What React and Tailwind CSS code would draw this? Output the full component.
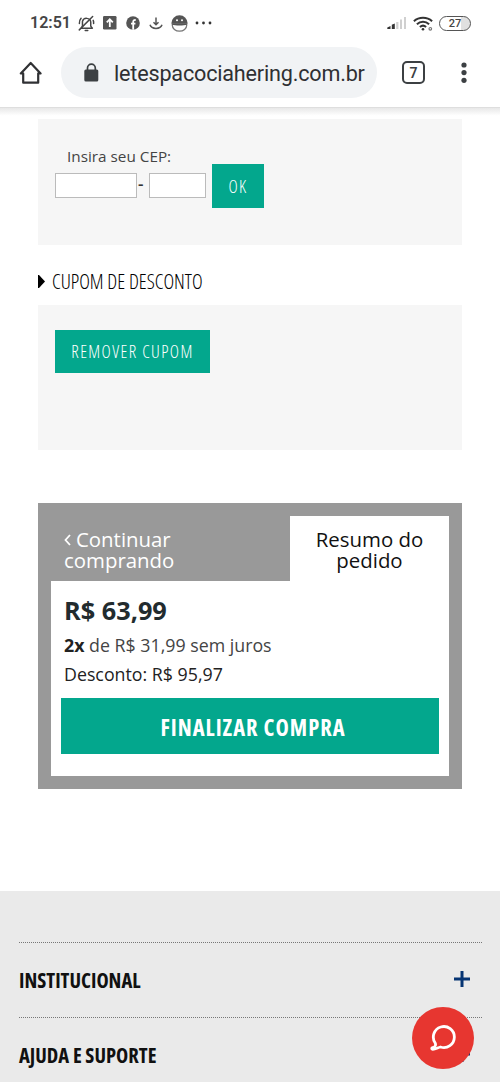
import React from 'react';

const StatusBar = () => (
  <div className="flex h-[46px] items-center pl-[30px] pr-[29px] text-[#454545]">
    <span className="w-[40px] whitespace-nowrap font-['Roboto',sans-serif] text-[16px] font-semibold leading-none">12:51</span>
    <svg className="ml-[8px] h-[17px] w-[17px]" viewBox="0 0 16 16" fill="none" stroke="currentColor" strokeWidth="1.4" strokeLinecap="round" strokeLinejoin="round">
      <path d="M3 12.5h10.5L12 10.5V6.7A4 4 0 0 0 4.2 6v4.5L3 12.5" />
      <path d="M6.8 14.5h2.4M13.8 1.5 1.2 14M1.3 8c-.2-2 .4-3.7 1.6-5M14.7 8c.1-1.2 0-2.2-.4-3" />
    </svg>
    <svg className="ml-[8px] h-[14px] w-[14px]" viewBox="0 0 14 14">
      <rect width="13.5" height="13.5" rx="1.2" fill="#555" />
      <path d="M6.8 11V4M3.8 6.3 6.8 3.2l3 3.1" fill="none" stroke="white" strokeWidth="1.8" />
    </svg>
    <svg className="ml-[9px] h-[14px] w-[14px]" viewBox="0 0 14 14">
      <circle cx="7" cy="7" r="6.8" fill="#555" />
      <path d="M7.2 13.8V6.1c0-1.5.6-2.2 2.5-2.1M5 7.6h4.4" fill="none" stroke="white" strokeWidth="1.8" />
    </svg>
    <svg className="ml-[9px] h-[14px] w-[14px]" viewBox="0 0 14 14" fill="none" stroke="#555" strokeWidth="1.5">
      <path d="M7 1.5v7M4.5 6.3 7 8.8l2.5-2.5M1 8.8c.6 2 2.8 3.6 6 3.6s5.4-1.6 6-3.6" />
    </svg>
    <svg className="ml-[8px] h-[17px] w-[17px]" viewBox="0 0 17 17">
      <path d="M.3 8.5a8.2 8.2 0 0 1 16.4 0z" fill="#555" />
      <path d="M1.3 8.7h14.4v1.5a7.2 6 0 0 1-14.4 0z" fill="white" stroke="#777" strokeWidth="1.3" />
      <path d="M1 8.5h15v1c-3 1.3-12 1.3-15 0z" fill="#555" />
      <circle cx="6" cy="5.2" r="1" fill="white" />
      <circle cx="11" cy="5.2" r="1" fill="white" />
    </svg>
    <svg className="ml-[7px] h-1 w-[18px]" viewBox="0 0 18 4" fill="#333">
      <circle cx="2" cy="2" r="1.4" /><circle cx="8.5" cy="2" r="1.4" /><circle cx="15" cy="2" r="1.4" />
    </svg>
    <svg className="ml-auto h-[14px] w-[20px]" viewBox="0 0 20 14">
      <path d="M.3 11.5 3.5 10v3H.3zM4.8 8.8 7.8 7.5V13h-3z" fill="#333" />
      <path d="M9.2 6h2.2v7H9.2zM13 3.5h2V13h-2zM17 1h2v12h-2z" fill="#d0d0d0" />
    </svg>
    <svg className="ml-[6px] h-[15px] w-[20px]" viewBox="0 0 20 15" fill="none" stroke="#333" strokeWidth="2">
      <path d="M.9 5.2c5-4.6 13.2-4.6 18.2 0M3.9 8.2c3.5-3.2 8.7-3.2 12.2 0M6.9 11c1.8-1.6 4.4-1.6 6.2 0" />
      <circle cx="10" cy="13.3" r="1.3" fill="#333" stroke="none" />
      <circle cx="17.3" cy="12.8" r="1.3" stroke="#777" strokeWidth="1.2" />
    </svg>
    <div className="ml-[6px] flex h-[15px] w-[32px] items-center justify-center rounded-full border-[1.5px] border-[#555] bg-[linear-gradient(90deg,white_70%,#e0e0e0_70%)] font-['Roboto',sans-serif] text-[11px] font-medium leading-none">27</div>
  </div>
);

const BrowserBar = () => (
  <div className="flex h-[62px] items-start border-b border-[#dedede] pt-px">
    <svg className="ml-[19px] mt-[14px] h-6 w-6" viewBox="0 0 24 24" fill="none" stroke="#303134" strokeWidth="2.2">
      <path d="M4.2 12.4H1.8L11.7 2l9.9 10.4h-2.4v9.3h-15z" strokeLinejoin="round" />
    </svg>
    <div className="ml-[18px] flex h-[51px] w-[316px] items-center rounded-full bg-[#f1f3f5] pl-[23px]">
      <svg className="h-[19px] w-[15px]" viewBox="0 0 15 19">
        <path d="M3.5 8V5a3.9 3.9 0 0 1 7.8 0v3" fill="none" stroke="#3c4043" strokeWidth="1.7" />
        <rect x=".3" y="6.5" width="14" height="12" rx="1.5" fill="#3c4043" />
      </svg>
      <span className="ml-[15px] whitespace-nowrap pt-[2px] font-['Roboto',sans-serif] text-[21.6px] leading-none tracking-[-0.19px] text-[#2f3033]">letespacociahering.com.br</span>
    </div>
    <div className="ml-[25px] mt-[14px] flex h-[23px] w-[23px] items-center justify-center rounded-[5px] border-[2.5px] border-[#3c4043] font-['Roboto',sans-serif] text-[14px] font-semibold leading-none text-[#3c4043]">7</div>
    <svg className="ml-[36px] mt-[15px] h-[22px] w-[6px]" viewBox="0 0 6 22" fill="#3c4043">
      <circle cx="3" cy="3" r="2.6" /><circle cx="3" cy="10.6" r="2.6" /><circle cx="3" cy="18.3" r="2.6" />
    </svg>
  </div>
);

const ShippingForm = () => (
  <section className="mx-[38px] h-[126px] bg-[#f6f6f6] pl-[17px] pt-[27px]">
    <p className="pl-[12px] text-[15.3px] leading-[20px] text-[#444]">Insira seu CEP:</p>
    <div className="-mt-[2px] flex items-start">
      <input className="mt-[9px] h-[25px] w-[82px] border border-[#bbb] bg-white" />
      <span className="mt-[9px] w-[12px] pl-px text-[17px] font-semibold leading-[22px] text-[#333]">-</span>
      <input className="mt-[9px] h-[25px] w-[57px] border border-[#bbb] bg-white" />
      <button className="ml-[6px] h-[44px] w-[52px] bg-[#03a78d] text-[17.5px] font-light tracking-[1.4px] text-white [font-stretch:75%]">OK</button>
    </div>
  </section>
);

const Coupon = () => (
  <>
    <h2 className="ml-[38px] mt-[24px] flex h-[24px] items-center text-[20.3px] font-light leading-[24px] text-black [font-stretch:75%]">
      <svg className="mr-[7px] h-[13px] w-[7px]" viewBox="0 0 7 13"><path d="M0 0h1l6 6.5L1 13H0z" /></svg>
      CUPOM DE DESCONTO
    </h2>
    <section className="mx-[38px] mt-[12px] h-[145px] bg-[#f6f6f6] pl-[17px] pt-[25px]">
      <button className="h-[43px] w-[155px] whitespace-nowrap bg-[#03a78d] text-[17.5px] font-light tracking-[1.4px] text-white [font-stretch:75%]">REMOVER CUPOM</button>
    </section>
  </>
);

const OrderSummary = () => (
  <section className="mx-[38px] mt-[53px] h-[286px] bg-[#999] px-[13px] pt-[13px]">
    <div className="flex h-[65px] text-[20.4px] leading-[21px]">
      <div className="w-[239px] pl-[13px] pt-[13px] text-white">
        <div className="flex items-center">
          <svg className="mr-[5px] h-[12px] w-[7px]" viewBox="0 0 7 12" fill="none" stroke="white" strokeWidth="1.8"><path d="M6 1 1.5 6 6 11" /></svg>
          Continuar
        </div>
        <div>comprando</div>
      </div>
      <div className="w-[159px] bg-white pt-[13px] text-center text-[#111]">Resumo do<br />pedido</div>
    </div>
    <div className="h-[195px] bg-white px-[10px] pt-[13px]">
      <p className="pl-[3px] text-[25.3px] font-bold leading-[32px] text-[#222b2e]">R$ 63,99</p>
      <p className="mt-[7px] pl-[3px] text-[17.8px] leading-[24px] text-[#444]"><b className="text-[#222]">2x</b> de R$ 31,99 sem juros</p>
      <p className="mt-[5px] pl-[3px] text-[17.8px] leading-[24px] text-[#222]">Desconto: R$ 95,97</p>
      <button className="mt-[12px] h-[56px] w-[378px] bg-[#03a78d] pl-[6px] pt-[3px] text-[22.5px] font-bold tracking-[1px] text-white [font-stretch:75%]">FINALIZAR COMPRA</button>
    </div>
  </section>
);

const FooterRow = ({ title }) => (
  <div className="flex h-[75px] items-center justify-between border-t-[1.5px] border-dotted border-[#777] pr-[12px]">
    <span className="text-[20.6px] font-bold text-[#111] [font-stretch:75%]">{title}</span>
    <svg className="-mt-[2px] h-4 w-4" viewBox="0 0 16 16" stroke="#063573" strokeWidth="3"><path d="M0 8h16M8 0v16" /></svg>
  </div>
);

const Footer = () => (
  <footer className="mt-[102px] h-[191px] overflow-hidden bg-[#eaeaea] pl-[19px] pr-[18px] pt-[51px]">
    <FooterRow title="INSTITUCIONAL" />
    <FooterRow title="AJUDA E SUPORTE" />
  </footer>
);

const ChatButton = () => (
  <button className="absolute bottom-[13px] right-[26px] flex h-[62px] w-[62px] items-center justify-center rounded-full bg-[#e73630]">
    <svg className="h-[26px] w-[26px]" viewBox="0 0 26 26" fill="none" stroke="white" strokeWidth="2.8" strokeLinecap="round" strokeLinejoin="round">
      <path d="M5.2 18A10.5 10.5 0 1 1 10.5 22C8 22.6 5.5 24.3 2.8 24.4 1.3 24.2 1.5 22.9 2.6 22.6 5.5 21.8 6 20 5.2 18z" />
    </svg>
  </button>
);

const App = () => (
  <div className="relative h-[1082px] w-[500px] overflow-hidden bg-white font-['Open_Sans',sans-serif]">
    <StatusBar />
    <BrowserBar />
    <div className="h-[11px] bg-gradient-to-b from-[#e8e8e8] to-white to-70%" />
    <ShippingForm />
    <Coupon />
    <OrderSummary />
    <Footer />
    <ChatButton />
  </div>
);

export default App;
